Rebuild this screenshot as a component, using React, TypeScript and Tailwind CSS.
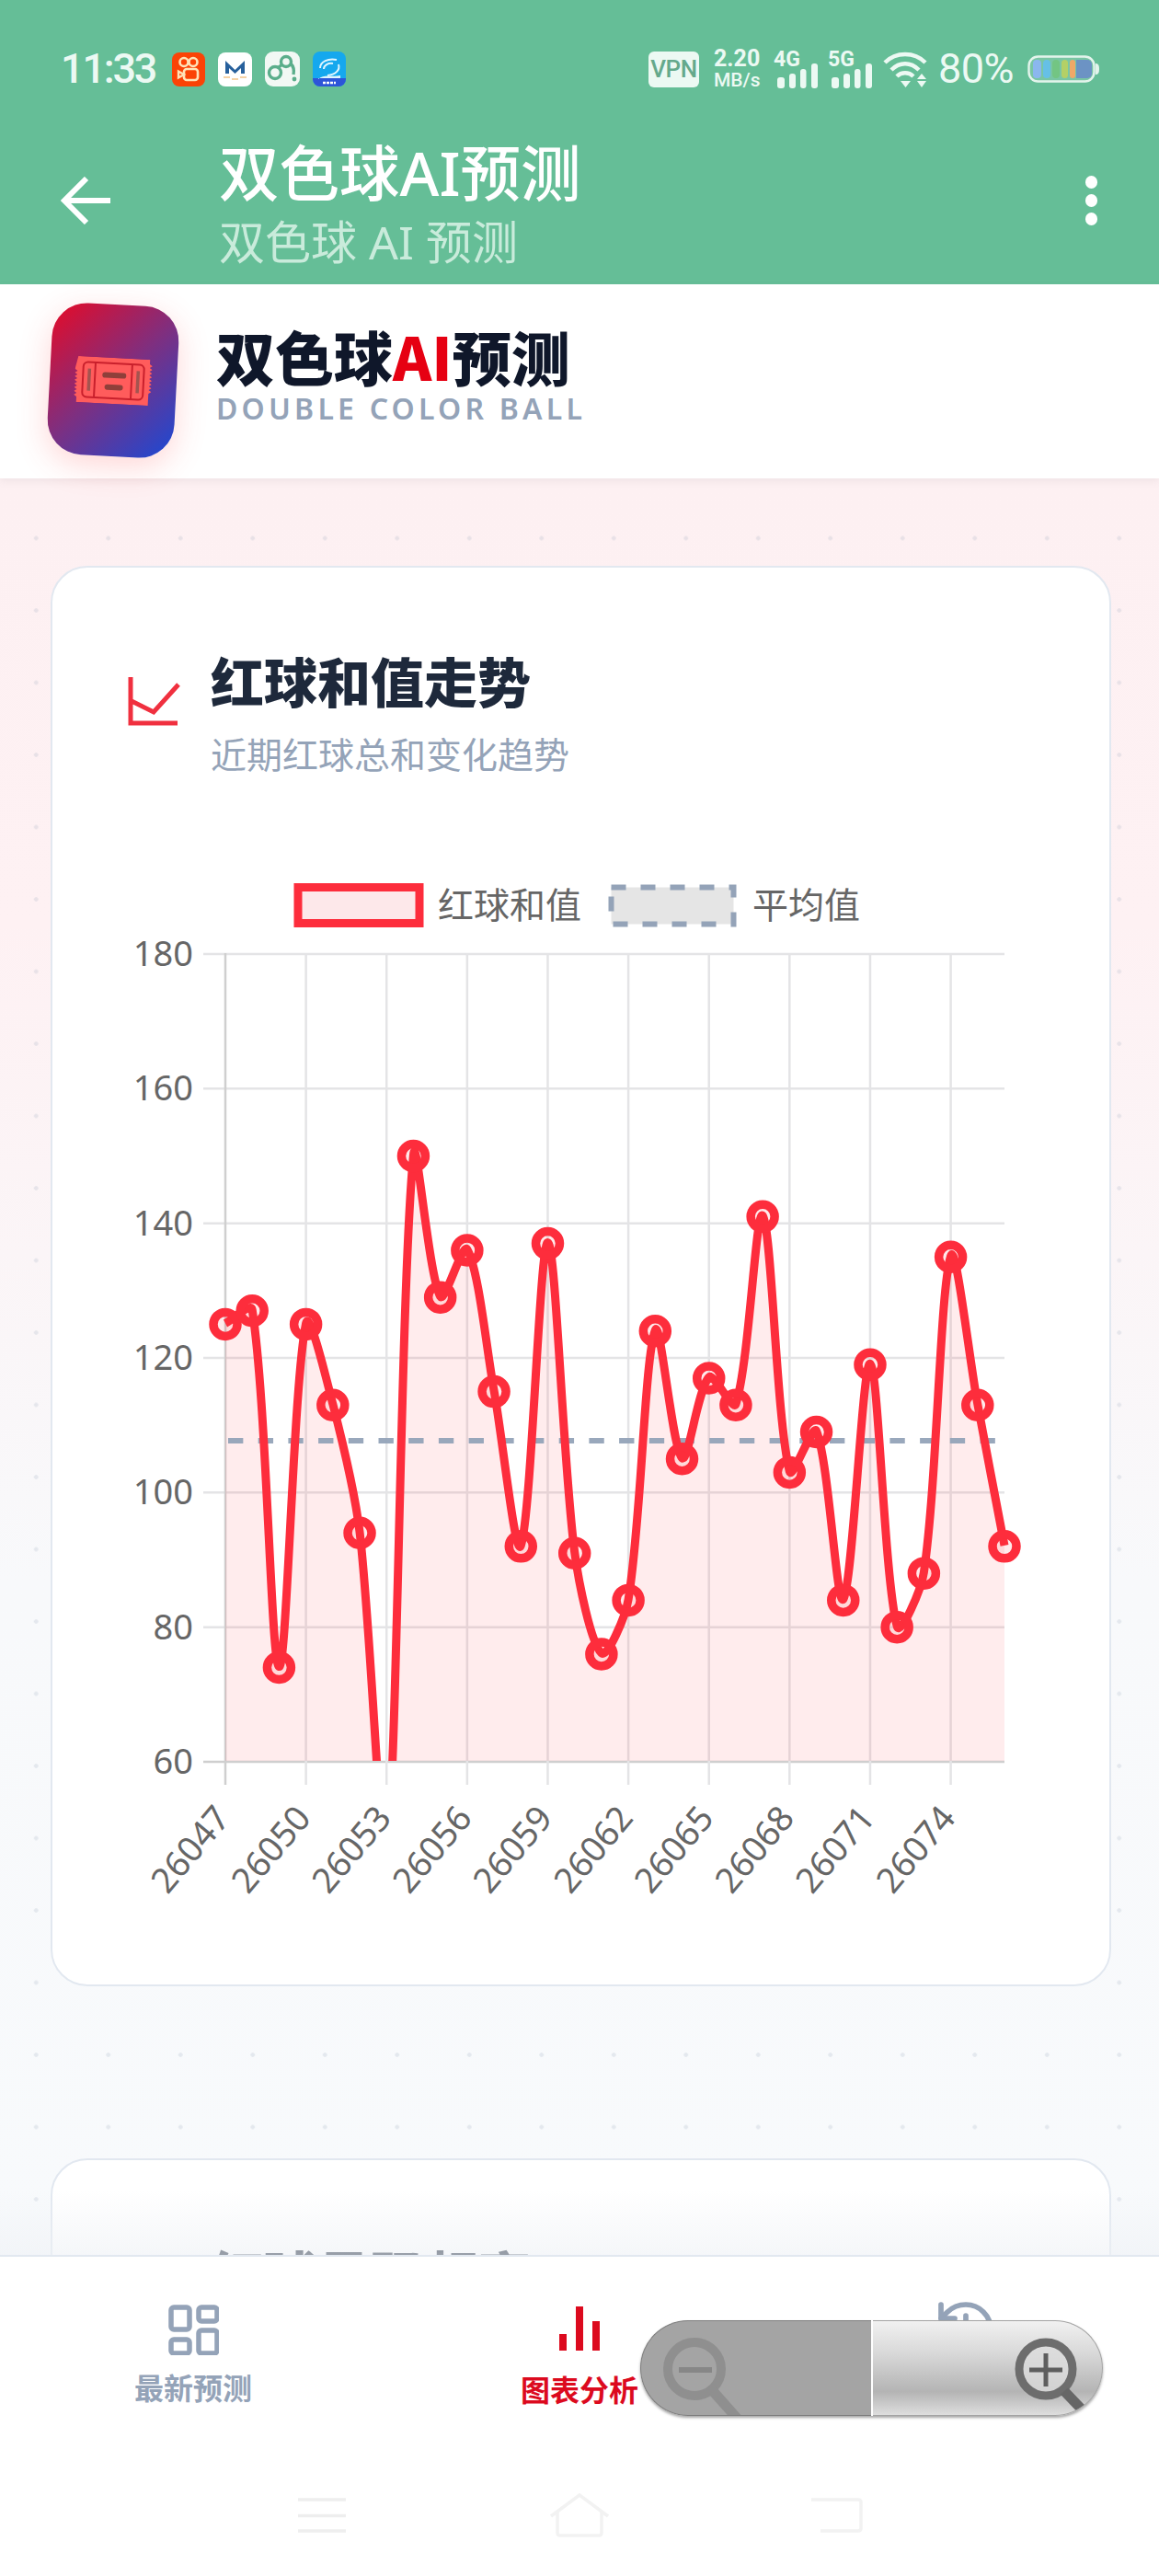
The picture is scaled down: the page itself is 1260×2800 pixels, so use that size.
import { History } from "lucide-react";

// chart geometry, in page pixels
const PLOT = { left: 245, right: 1092, top: 1036, bottom: 1914 };
const STEP = (PLOT.right - PLOT.left) / 29;
const yOf = (v: number) => PLOT.top + ((180 - v) / 120) * (PLOT.bottom - PLOT.top);

const SUMS = [125, 127, 74, 125, 113, 94, 46, 150, 129, 136, 115, 92, 137, 91, 76, 84, 124, 105, 117, 113, 141, 103, 109, 84, 119, 80, 88, 135, 113, 92];
const YTICKS = [180, 160, 140, 120, 100, 80, 60];
const XLABELS = ["26047", "26050", "26053", "26056", "26059", "26062", "26065", "26068", "26071", "26074"];
const RED = "#fd2d3c";

const points = SUMS.map((v, i) => ({ x: PLOT.left + i * STEP, y: yOf(v) }));

// same spline as a chart.js line with tension set
const buildCurve = () => {
  const t = 0.3;
  const ctrl = points.map((p, i) => {
    const prev = points[i - 1] ?? p;
    const next = points[i + 1] ?? p;
    const d01 = Math.hypot(p.x - prev.x, p.y - prev.y);
    const d12 = Math.hypot(next.x - p.x, next.y - p.y);
    const sum = d01 + d12 || 1;
    const fa = (t * d01) / sum;
    const fb = (t * d12) / sum;
    return {
      inX: p.x - fa * (next.x - prev.x),
      inY: p.y - fa * (next.y - prev.y),
      outX: p.x + fb * (next.x - prev.x),
      outY: p.y + fb * (next.y - prev.y),
    };
  });
  let d = `M${points[0].x} ${points[0].y}`;
  for (let i = 1; i < points.length; i++) {
    d += ` C${ctrl[i - 1].outX} ${ctrl[i - 1].outY} ${ctrl[i].inX} ${ctrl[i].inY} ${points[i].x} ${points[i].y}`;
  }
  return d;
};

const curve = buildCurve();

const SumChart = () => (
  <svg viewBox="57 940 1148 1200" width={1148} height={1200} className="block">
    <defs>
      <clipPath id="plot-clip">
        <rect x={200} y={PLOT.top - 40} width={940} height={PLOT.bottom - PLOT.top + 40} />
      </clipPath>
    </defs>

    {/* legend */}
    <rect x={324} y={964.5} width={132} height={39} fill="#fde8ea" stroke={RED} strokeWidth={9} />
    <text x={476} y={998} fontSize={39} fill="#666666">红球和值</text>
    <rect x={664.5} y={964.5} width={133} height={40} fill="#e5e5e5" stroke="#94a3b8" strokeWidth={6} strokeDasharray="16 16" />
    <text x={818} y={998} fontSize={39} fill="#666666">平均值</text>

    {/* grid */}
    {YTICKS.map((v) => (
      <line key={v} x1={221} x2={PLOT.right} y1={yOf(v) + 1} y2={yOf(v) + 1} stroke={v === 60 ? "#cfcfcf" : "#e4e4e6"} strokeWidth={2.5} />
    ))}
    {XLABELS.map((_, i) => {
      const x = PLOT.left + i * 3 * STEP;
      return <line key={i} x1={x} x2={x} y1={PLOT.top} y2={1940} stroke={i === 0 ? "#cfcfcf" : "#e4e4e6"} strokeWidth={2.5} />;
    })}

    {/* axis labels */}
    {YTICKS.map((v) => (
      <text key={v} x={210} y={yOf(v) + 14} textAnchor="end" fontSize={38} fill="#666666">{v}</text>
    ))}
    {XLABELS.map((label, i) => {
      const x = PLOT.left + i * 3 * STEP + 7;
      return (
        <text key={label} x={x} y={1977} textAnchor="end" fontSize={38} fill="#666666" transform={`rotate(-50 ${x} 1977)`}>
          {label}
        </text>
      );
    })}

    {/* series */}
    <g clipPath="url(#plot-clip)">
      <path d={`${curve} L${PLOT.right} ${PLOT.bottom} L${PLOT.left} ${PLOT.bottom} Z`} fill={RED} fillOpacity={0.09} />
      <line x1={248} x2={PLOT.right} y1={1566} y2={1566} stroke="#94a3b8" strokeOpacity={0.95} strokeWidth={6} strokeDasharray="16.35 16.35" />
      <path d={curve} fill="none" stroke={RED} strokeWidth={9} />
      {points.map((p, i) =>
        SUMS[i] < 60 ? null : <circle key={i} cx={p.x} cy={p.y + 1} r={13} fill={RED} fillOpacity={0.1} stroke={RED} strokeWidth={9.5} />
      )}
    </g>
  </svg>
);

const StatusIcons = () => (
  <div className="flex items-center gap-[14px] ml-[19px]">
    <svg width={36} height={37} viewBox="0 0 36 37">
      <rect width={36} height={37} rx={8} fill="#fb4306" />
      <circle cx={13} cy={10.5} r={4.5} fill="none" stroke="#ffe3b8" strokeWidth={2.6} />
      <circle cx={23} cy={10.5} r={4.5} fill="none" stroke="#ffe3b8" strokeWidth={2.6} />
      <rect x={13} y={18} width={15} height={12} rx={3} fill="none" stroke="#ffe3b8" strokeWidth={2.6} />
      <path d="M13 24 7 20.5V27.5Z" fill="none" stroke="#ffe3b8" strokeWidth={2.4} />
    </svg>
    <svg width={37} height={37} viewBox="0 0 37 37">
      <rect width={37} height={37} rx={8} fill="#ffffff" />
      <path d="M8 23V9l10.5 10L29 9v14h-4v-6l-6.5 6-6.5-6v6Z" fill="#27609c" />
      <path d="M6 27h7M24 27h7M15 29h7" stroke="#eda64b" strokeWidth={1.2} />
    </svg>
    <svg width={38} height={38} viewBox="0 0 38 38">
      <rect width={38} height={38} rx={9} fill="#f2f8f4" />
      <circle cx={23} cy={11} r={5.5} fill="none" stroke="#5bae8b" strokeWidth={3.4} />
      <circle cx={11} cy={23} r={6.5} fill="none" stroke="#5bae8b" strokeWidth={3.4} />
      <path d="M15 17 19 14M28 13c3 3 4 7 3 12" fill="none" stroke="#5bae8b" strokeWidth={3.4} />
      <circle cx={32} cy={30} r={2.4} fill="#5bae8b" />
    </svg>
    <svg width={36} height={38} viewBox="0 0 36 38">
      <defs>
        <clipPath id="blue-app">
          <rect width={36} height={38} rx={8} />
        </clipPath>
      </defs>
      <g clipPath="url(#blue-app)">
        <rect width={36} height={38} fill="#15a8ee" />
        <rect y={29} width={36} height={9} fill="#2d55d8" />
        <path d="M8 18c0-7 9-11 18-9M12 19c0-4 5-7 10-6M28 14c2 6-3 11-12 12" fill="none" stroke="#dff6ff" strokeWidth={2} />
        <path d="M6 30c6-6 14-2 24-4v3H6Z" fill="#dff6ff" />
        <path d="M11 34h14" stroke="#ffffff" strokeWidth={2.4} strokeDasharray="3 1" />
      </g>
    </svg>
  </div>
);

const SignalBars = ({ label }: { label: string }) => (
  <svg width={48} height={42} viewBox="0 0 48 42" className="overflow-visible">
    <text x={-1} y={18} fontSize={23} fontWeight={700} fill="#ecf9f3">{label}</text>
    <rect x={3} y={30} width={8} height={12} rx={3} fill="#ecf9f3" />
    <rect x={16} y={26} width={7} height={16} rx={3} fill="#ecf9f3" />
    <rect x={28} y={21} width={6.5} height={21} rx={3} fill="#ecf9f3" />
    <rect x={40} y={15} width={7} height={27} rx={3} fill="#ecf9f3" />
  </svg>
);

const WifiIcon = () => (
  <svg width={48} height={40} viewBox="0 0 48 40">
    <path d="M2 13C14 1 34 1 46 13" fill="none" stroke="#ecf9f3" strokeWidth={4.5} />
    <path d="M9 21C18 12 30 12 39 21" fill="none" stroke="#ecf9f3" strokeWidth={4.5} />
    <path d="M15 28C20 23 28 23 33 28" fill="none" stroke="#ecf9f3" strokeWidth={4.5} />
    <path d="M19 33H30L24.500 40Z M42 25 37 31H47Z" fill="#ecf9f3" />
    <path d="M37 33H47L42 40Z" fill="#ecf9f3" />
  </svg>
);

const BatteryIcon = () => (
  <svg width={78} height={30} viewBox="0 0 78 30">
    <rect x={1.5} y={1.5} width={71} height={27} rx={10} fill="#e8f6ef" fillOpacity={0.15} stroke="#e3f4ec" strokeWidth={2.4} />
    <path d="M74 9c3 0 4 2 4 6s-1 6-4 6Z" fill="#e3f4ec" />
    <rect x={6} y={5} width={9} height={20} rx={4} fill="#8bb7ee" />
    <rect x={17} y={5} width={8} height={20} rx={4} fill="#66c0e6" />
    <rect x={27} y={5} width={8} height={20} rx={4} fill="#73c583" />
    <rect x={37} y={5} width={7} height={20} rx={3.500} fill="#b4d066" />
    <rect x={46} y={5} width={6} height={20} rx={3} fill="#f0a868" />
    <path d="M53 5h12a5 5 0 0 1 5 5v10a5 5 0 0 1-5 5H53Z" fill="#6c93c4" />
  </svg>
);

const AppHeader = () => (
  <header className="h-[309px] shrink-0 bg-[#65be97] pt-[55px]">
    <div className="flex items-center justify-between h-[40px] pl-[66px] pr-[65px]">
      <div className="flex items-center">
        <span className="w-[102px] text-[45px] leading-[40px] font-medium tracking-[-2.2px] text-[#ecf9f3] font-['Roboto',sans-serif]">11:33</span>
        <StatusIcons />
      </div>
      <div className="flex items-center font-['Roboto',sans-serif] text-[#ecf9f3]">
        <span className="flex items-center justify-center w-[55px] h-[39px] rounded-[6px] bg-[#ecf9f3] text-[#65a98c] text-[26px] font-medium tracking-[-0.5px]">VPN</span>
        <span className="flex flex-col items-start w-[50px] ml-[16px] text-center font-medium">
          <span className="text-[25px] leading-[24px] font-bold">2.20</span>
          <span className="text-[21px] leading-[22px] whitespace-nowrap">MB/s</span>
        </span>
        <span className="ml-[16px]"><SignalBars label="4G" /></span>
        <span className="ml-[11px]"><SignalBars label="5G" /></span>
        <span className="ml-[11px]"><WifiIcon /></span>
        <span className="ml-[12px] w-[85px] text-[45px] leading-[40px] tracking-[-0.5px]">80%</span>
        <span className="ml-[12px]"><BatteryIcon /></span>
      </div>
    </div>

    <div className="flex items-start pl-[66px] pr-[66px] mt-[57px]">
      <svg width={54} height={52} viewBox="0 0 54 52" className="mt-[40px] shrink-0" fill="none" stroke="#ffffff" strokeWidth={6}>
        <path d="M54 26H5M28 2 4 26l24 24" />
      </svg>
      <div className="ml-[118px] flex-1">
        <div className="text-[65.500px] leading-[72px] font-medium text-white">双色球AI预测</div>
        <div className="mt-[9px] text-[50px] leading-[60px] text-[#c9ebdb]">双色球 AI 预测</div>
      </div>
      <div className="flex flex-col gap-[6.5px] mt-[39px] mr-[1px]">
        <span className="w-[13.5px] h-[13.5px] rounded-full bg-white" />
        <span className="w-[13.5px] h-[13.5px] rounded-full bg-white" />
        <span className="w-[13.5px] h-[13.5px] rounded-full bg-white" />
      </div>
    </div>
  </header>
);

const BrandBar = () => (
  <div className="relative z-10 flex items-start h-[211px] shrink-0 bg-white shadow-[0_3px_8px_rgba(120,120,130,0.1)]">
    <div className="flex items-center justify-center w-[138px] h-[165px] ml-[54px] mt-[22px] rounded-[38px] rotate-3 bg-[linear-gradient(135deg,#e70a26_0%,#7e2f80_50%,#1a4ad6_100%)] shadow-[0_10px_34px_rgba(255,70,70,0.22)]">
      <svg width={84} height={50} viewBox="0 0 84 50">
        <path d="M3 0H81V5l3 2-3 2 3 2-3 2 3 2-3 2 3 2-3 2 3 2-3 2 3 2-3 2 3 2-3 2 3 2-3 2V50H3V44l-3-2 3-2-3-2 3-2-3-2 3-2-3-2 3-2-3-2 3-2-3-2 3-2-3-2 3-2-3-2Z" fill="#ff5c5c" />
        <rect x={9} y={6} width={66} height={38} rx={5} fill="none" stroke="#c9202c" strokeWidth={2} />
        <path d="M22 6V44M62 6V44" stroke="#c9202c" strokeWidth={2} />
        <rect x={14} y={13} width={3.500} height={24} fill="#a3544f" />
        <rect x={67} y={13} width={3.500} height={24} fill="#a3544f" />
        <rect x={30} y={16} width={26} height={6} rx={3} fill="#8f3f3a" />
        <rect x={33} y={29} width={20} height={6} rx={3} fill="#8f3f3a" />
      </svg>
    </div>
    <div className="ml-[43px] mt-[41px]">
      <div className="text-[64px] leading-[72px] font-extrabold text-[#0f172a] font-['Noto_Sans_CJK_SC',sans-serif]">
        双色球<span className="text-[#e60012]">AI</span>预测
      </div>
      <div className="mt-[4px] text-[32px] leading-[36px] font-semibold tracking-[4.2px] text-[#94a3b8] whitespace-nowrap">DOUBLE COLOR BALL</div>
    </div>
  </div>
);

const ChartCard = () => (
  <section className="h-[1544px] rounded-[40px] border-2 border-[#e2e8f0] bg-white overflow-hidden">
    <div className="flex items-start h-[323px] pl-[82px] pt-[91px]">
      <svg width={58} height={54} viewBox="0 0 58 54" className="mt-[28px] shrink-0" fill="none" stroke="#f0303f" strokeWidth={5}>
        <path d="M3 0V50H54M2 25 28 38 55 8" />
      </svg>
      <div className="ml-[32px]">
        <div className="text-[58px] leading-[68px] font-extrabold text-[#1e293b]">红球和值走势</div>
        <div className="mt-[20px] text-[39px] leading-[48px] text-[#94a3b8]">近期红球总和变化趋势</div>
      </div>
    </div>
    <SumChart />
  </section>
);

const NextCard = () => (
  <section className="h-[400px] mt-[187px] rounded-[40px] border-2 border-[#e2e8f0] bg-white pl-[172px] pt-[92px]">
    <div className="text-[58px] leading-[68px] font-extrabold text-[#1e293b]">红球号码频率</div>
  </section>
);

const BottomNav = () => (
  <nav className="relative h-[349px] shrink-0 border-t-2 border-[#e2e8f0] bg-white">
    <div className="grid grid-cols-3 h-[230px]">
      <div className="flex flex-col items-center pt-[52px]">
        <svg width={55} height={55} viewBox="0 0 55 55" fill="none" stroke="#94a3b8" strokeWidth={5.5}>
          <rect x={3} y={3} width={20} height={24} rx={3} />
          <rect x={33} y={3} width={20} height={15} rx={3} />
          <rect x={3} y={38} width={20} height={15} rx={3} />
          <rect x={33} y={28} width={20} height={25} rx={3} />
        </svg>
        <span className="mt-[16px] text-[32px] leading-[40px] font-bold text-[#94a3b8]">最新预测</span>
      </div>
      <div className="flex flex-col items-center pt-[54px]">
        <svg width={44} height={48} viewBox="0 0 44 48" fill="#dc0a1e">
          <rect x={0} y={30} width={8} height={18} />
          <rect x={18} y={0} width={8} height={48} />
          <rect x={36} y={16} width={8} height={32} />
        </svg>
        <span className="mt-[23px] text-[32px] leading-[40px] font-bold text-[#dc0a1e]">图表分析</span>
      </div>
      <div className="flex flex-col items-center pt-[43px]">
        <History size={72} color="#94a3b8" strokeWidth={1.9} />
      </div>
    </div>

    <div className="grid grid-cols-3 w-[840px] mx-auto h-[60px] mt-[21px] place-items-center">
      <svg width={52} height={40} viewBox="0 0 52 40" stroke="#eeeeee" strokeWidth={3.5}>
        <path d="M0 3H52M0 20.500H52M0 37H52" />
      </svg>
      <svg width={66} height={48} viewBox="0 0 66 48" fill="none" stroke="#f2f2f2" strokeWidth={3.5}>
        <path d="M2 25 33 2l31 23M9 21V43q0 3 3 3H54q3 0 3-3V21" />
      </svg>
      <svg width={56} height={40} viewBox="0 0 56 40" fill="none" stroke="#f2f2f2" strokeWidth={3.5}>
        <path d="M0 3H51q3 0 3 3V34q0 3-3 3H10" />
      </svg>
    </div>
  </nav>
);

const ZoomControl = () => (
  <div className="absolute left-[696px] top-[2522px] z-20 flex w-[503px] h-[104px] rounded-full shadow-[0_2px_3px_rgba(0,0,0,0.35)]">
    <div className="relative w-[251px] rounded-l-full border border-r-0 border-[#7d7d7d] bg-[#a4a4a4] overflow-hidden">
      <svg width={120} height={104} viewBox="0 0 120 104" className="absolute left-0 top-0" fill="none">
        <circle cx={58} cy={52} r={29} stroke="#8f8f8f" strokeWidth={10} />
        <path d="M78 76 110 112" stroke="#8f8f8f" strokeWidth={11} />
        <path d="M41 53H77" stroke="#878787" strokeWidth={6} />
      </svg>
    </div>
    <div className="relative flex-1 ml-[2px] rounded-r-full border border-l-0 border-[#a3a3a3] bg-[linear-gradient(180deg,#f1f1f1_0%,#d8d8d8_35%,#b4b4b4_75%,#dedede_100%)] overflow-hidden">
      <svg width={120} height={104} viewBox="0 0 120 104" className="absolute right-0 top-0" fill="none">
        <circle cx={59} cy={52} r={29} fill="#dcdcdc" fillOpacity={0.75} stroke="#6d6d6d" strokeWidth={9} />
        <path d="M79 76 102 100" stroke="#666666" strokeWidth={11} />
        <path d="M41 53H77M59 35V71" stroke="#5e5e5e" strokeWidth={5} />
      </svg>
    </div>
  </div>
);

export default function App() {
  return (
    <div className="relative flex flex-col w-[1260px] h-[2800px] overflow-hidden bg-white font-['Noto_Sans','Noto_Sans_CJK_SC',sans-serif]">
      <AppHeader />
      <BrandBar />
      <main className="relative flex-1 min-h-0 overflow-hidden pt-[95px] pl-[55px] pr-[52px] bg-[radial-gradient(circle,rgba(148,163,184,0.2)_2px,transparent_2.6px),linear-gradient(180deg,#fdf0f2_0%,#fef1f3_25%,#f8f9fb_62%,#f8fafc_100%)] bg-[size:78.5px_78.5px,100%_100%] bg-[position:0_25.75px,0_0]">
        <ChartCard />
        <NextCard />
        <div className="absolute left-0 right-0 bottom-0 h-[70px] bg-gradient-to-b from-transparent to-[#eef1f5]/60" />
      </main>
      <BottomNav />
      <ZoomControl />
    </div>
  );
}
